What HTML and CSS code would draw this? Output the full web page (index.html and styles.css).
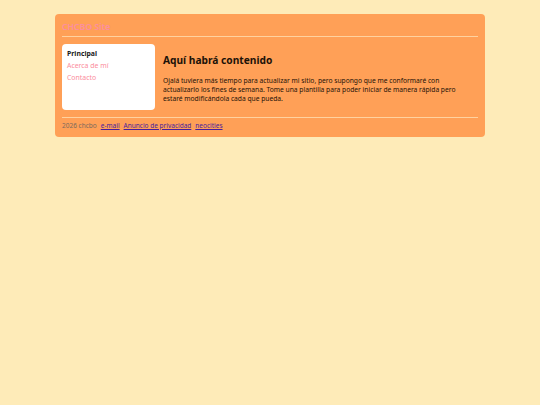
FILE: index.html
```html
<!DOCTYPE html>
<html lang="es">
<head>
<meta charset="utf-8">
<title>CHCBO Site</title>
<link rel="stylesheet" href="styles.css">
</head>
<body>
<div class="page">
  <header class="header">
    <span class="site-title">CHCBO Site</span>
  </header>
  <div class="body">
    <nav class="sidebar">
      <div class="nav-current">Principal</div>
      <a class="nav-link" href="#">Acerca de mí</a>
      <a class="nav-link" href="#">Contacto</a>
    </nav>
    <main class="content">
      <h1 class="title">Aquí habrá contenido</h1>
      <p class="text">Ojalá tuviera más tiempo para actualizar mi sitio, pero supongo que me conformaré con actualizarlo los fines de semana. Tome una plantilla para poder iniciar de manera rápida pero estaré modificándola cada que pueda.</p>
    </main>
  </div>
  <footer class="footer">
    <span class="copy">2026 chcbo</span>
    <a class="foot-link" href="#">e-mail</a>
    <a class="foot-link" href="#">Anuncio de privacidad</a>
    <a class="foot-link" href="#">neocities</a>
  </footer>
</div>
</body>
</html>
```
FILE: styles.css
```css
html, body {
  margin: 0;
  padding: 0;
}
body {
  background: #feebb8;
  font-family: "Noto Sans", sans-serif;
  padding-top: 14px;
}
.page {
  width: 430px;
  margin: 0 auto;
  background: #ffa057;
  border-radius: 4px;
  padding: 0 7px;
  box-sizing: border-box;
}
.header {
  height: 22px;
  border-bottom: 1px solid #ffd2a0;
  display: flex;
  align-items: center;
}
.site-title {
  color: #fb8ea0;
  font-size: 8.7px;
  font-weight: 600;
  padding-top: 4px;
}
.body {
  display: flex;
  gap: 8px;
  padding: 7px 0;
  border-bottom: 1px solid #ffd2a0;
}
.sidebar {
  width: 93px;
  height: 66px;
  box-sizing: border-box;
  background: #fff;
  border-radius: 4px;
  padding: 4px 5px;
  display: flex;
  flex-direction: column;
  font-size: 6.9px;
  line-height: 12px;
}
.nav-current {
  font-weight: 700;
  color: #1a1a1a;
}
.nav-link {
  color: #fb8d9c;
  text-decoration: none;
}
.content {
  flex: 1;
  padding-top: 9px;
  padding-right: 4px;
}
.title {
  margin: 0;
  font-size: 10.2px;
  font-weight: 700;
  color: #1c1208;
  line-height: 14px;
}
.text {
  margin: 8.5px 0 0;
  font-size: 6.7px;
  line-height: 9px;
  color: #1c1208;
}
.footer {
  display: flex;
  gap: 4px;
  align-items: center;
  padding: 3px 0 6px;
  line-height: 10px;
  font-size: 6.5px;
}
.copy {
  color: #7a6a5e;
}
.foot-link {
  color: #4a1f9c;
}
```
